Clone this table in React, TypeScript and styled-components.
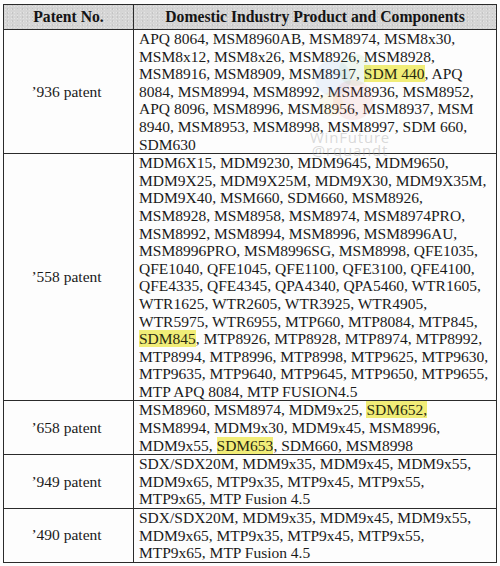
import React from "react";
import styled, { createGlobalStyle } from "styled-components";

const Global = createGlobalStyle`
  html, body { margin: 0; padding: 0; background: #fdfdfd; }
  body { font-family: "Liberation Serif", "Times New Roman", serif; color: #1a1a1a; }
`;

const Page = styled.div`
  position: relative;
  width: 500px;
  height: 566px;
  overflow: hidden;
  padding: 4px 3px 0 3px;
  box-sizing: border-box;
`;

const Table = styled.div`
  display: grid;
  grid-template-columns: 130px 1fr;
  border: 1px solid #2b2b2b;
  border-bottom: none;
`;

const HeadCell = styled.div<{ $last?: boolean }>`
  background: #d5d5d5;
  background-image: radial-gradient(rgba(255,255,255,0.35) 0.8px, transparent 1px),
    radial-gradient(rgba(120,120,120,0.18) 0.8px, transparent 1px);
  background-size: 3px 3px, 5px 4px;
  background-position: 0 0, 1px 2px;
  font-weight: bold;
  font-size: 15.7px;
  line-height: 24px;
  text-align: center;
  color: #141414;
  border-bottom: 1px solid #2b2b2b;
  border-right: ${(p) => (p.$last ? "none" : "1px solid #2b2b2b")};
`;

const LabelCell = styled.div`
  display: flex;
  align-items: center;
  justify-content: center;
  font-size: 15.5px;
  padding-right: 4px;
  border-right: 1px solid #2b2b2b;
  border-bottom: 1px solid #2b2b2b;
`;

const ListCell = styled.div`
  font-size: 15.5px;
  line-height: 17.6px;
  padding: 0 0 0 5px;
  border-bottom: 1px solid #2b2b2b;
`;

const Line = styled.div`
  white-space: nowrap;
  width: fit-content;
`;

const Mark = styled.span`
  background: #f1ed78;
  color: #2a2a10;
`;

const Watermark = styled.div`
  position: absolute;
  left: 300px;
  top: 48px;
  width: 100px;
  pointer-events: none;
  text-align: center;
  font-family: "Open Sans", "DejaVu Sans", sans-serif;
  color: rgba(160, 160, 160, 0.4);
`;

const WmText = styled.div<{ $size: number }>`
  font-size: ${(p) => p.$size}px;
  line-height: 13px;
  letter-spacing: 0.8px;
`;

type Row = { label: string; lines: string[] };

const rows: Row[] = [
  {
    label: "\u2019936 patent",
    lines: [
      "APQ 8064, MSM8960AB, MSM8974, MSM8x30,",
      "MSM8x12, MSM8x26, MSM8926, MSM8928,",
      "MSM8916, MSM8909, MSM8917, [SDM 440], APQ",
      "8084, MSM8994, MSM8992, MSM8936, MSM8952,",
      "APQ 8096, MSM8996, MSM8956, MSM8937, MSM",
      "8940, MSM8953, MSM8998, MSM8997, SDM 660,",
      "SDM630",
    ],
  },
  {
    label: "\u2019558 patent",
    lines: [
      "MDM6X15, MDM9230, MDM9645, MDM9650,",
      "MDM9X25, MDM9X25M, MDM9X30, MDM9X35M,",
      "MDM9X40, MSM660, SDM660, MSM8926,",
      "MSM8928, MSM8958, MSM8974, MSM8974PRO,",
      "MSM8992, MSM8994, MSM8996, MSM8996AU,",
      "MSM8996PRO, MSM8996SG, MSM8998, QFE1035,",
      "QFE1040, QFE1045, QFE1100, QFE3100, QFE4100,",
      "QFE4335, QFE4345, QPA4340, QPA5460, WTR1605,",
      "WTR1625, WTR2605, WTR3925, WTR4905,",
      "WTR5975, WTR6955, MTP660, MTP8084, MTP845,",
      "[SDM845], MTP8926, MTP8928, MTP8974, MTP8992,",
      "MTP8994, MTP8996, MTP8998, MTP9625, MTP9630,",
      "MTP9635, MTP9640, MTP9645, MTP9650, MTP9655,",
      "MTP APQ 8084, MTP FUSION4.5",
    ],
  },
  {
    label: "\u2019658 patent",
    lines: [
      "MSM8960, MSM8974, MDM9x25, [SDM652,]",
      "MSM8994, MDM9x30, MDM9x45, MSM8996,",
      "MDM9x55, [SDM653], SDM660, MSM8998",
    ],
  },
  {
    label: "\u2019949 patent",
    lines: [
      "SDX/SDX20M, MDM9x35, MDM9x45, MDM9x55,",
      "MDM9x65, MTP9x35, MTP9x45, MTP9x55,",
      "MTP9x65, MTP Fusion 4.5",
    ],
  },
  {
    label: "\u2019490 patent",
    lines: [
      "SDX/SDX20M, MDM9x35, MDM9x45, MDM9x55,",
      "MDM9x65, MTP9x35, MTP9x45, MTP9x55,",
      "MTP9x65, MTP Fusion 4.5",
    ],
  },
];

function renderLine(text: string) {
  const parts = text.split(/(\[[^\]]+\])/g).filter(Boolean);
  return parts.map((p, i) =>
    p.startsWith("[") ? <Mark key={i}>{p.slice(1, -1)}</Mark> : <React.Fragment key={i}>{p}</React.Fragment>
  );
}

export default function App() {
  return (
    <Page>
      <Global />
      <Table>
        <HeadCell>Patent No.</HeadCell>
        <HeadCell $last>Domestic Industry Product and Components</HeadCell>
        {rows.map((r) => (
          <React.Fragment key={r.label}>
            <LabelCell>{r.label}</LabelCell>
            <ListCell>
              {r.lines.map((l, i) => (
                <Line key={i}>{renderLine(l)}</Line>
              ))}
            </ListCell>
          </React.Fragment>
        ))}
      </Table>
      <Watermark>
        <svg width="90" height="78" viewBox="0 0 90 78">
          <circle cx="28" cy="30" r="18" fill="rgba(90,150,230,0.10)" />
          <circle cx="50" cy="22" r="16" fill="rgba(120,200,120,0.10)" />
          <circle cx="48" cy="52" r="20" fill="rgba(230,110,110,0.11)" />
          <circle cx="26" cy="56" r="12" fill="rgba(240,210,90,0.10)" />
        </svg>
        <WmText $size={15}>WinFuture</WmText>
        <WmText $size={15}>@rquandt</WmText>
      </Watermark>
    </Page>
  );
}
